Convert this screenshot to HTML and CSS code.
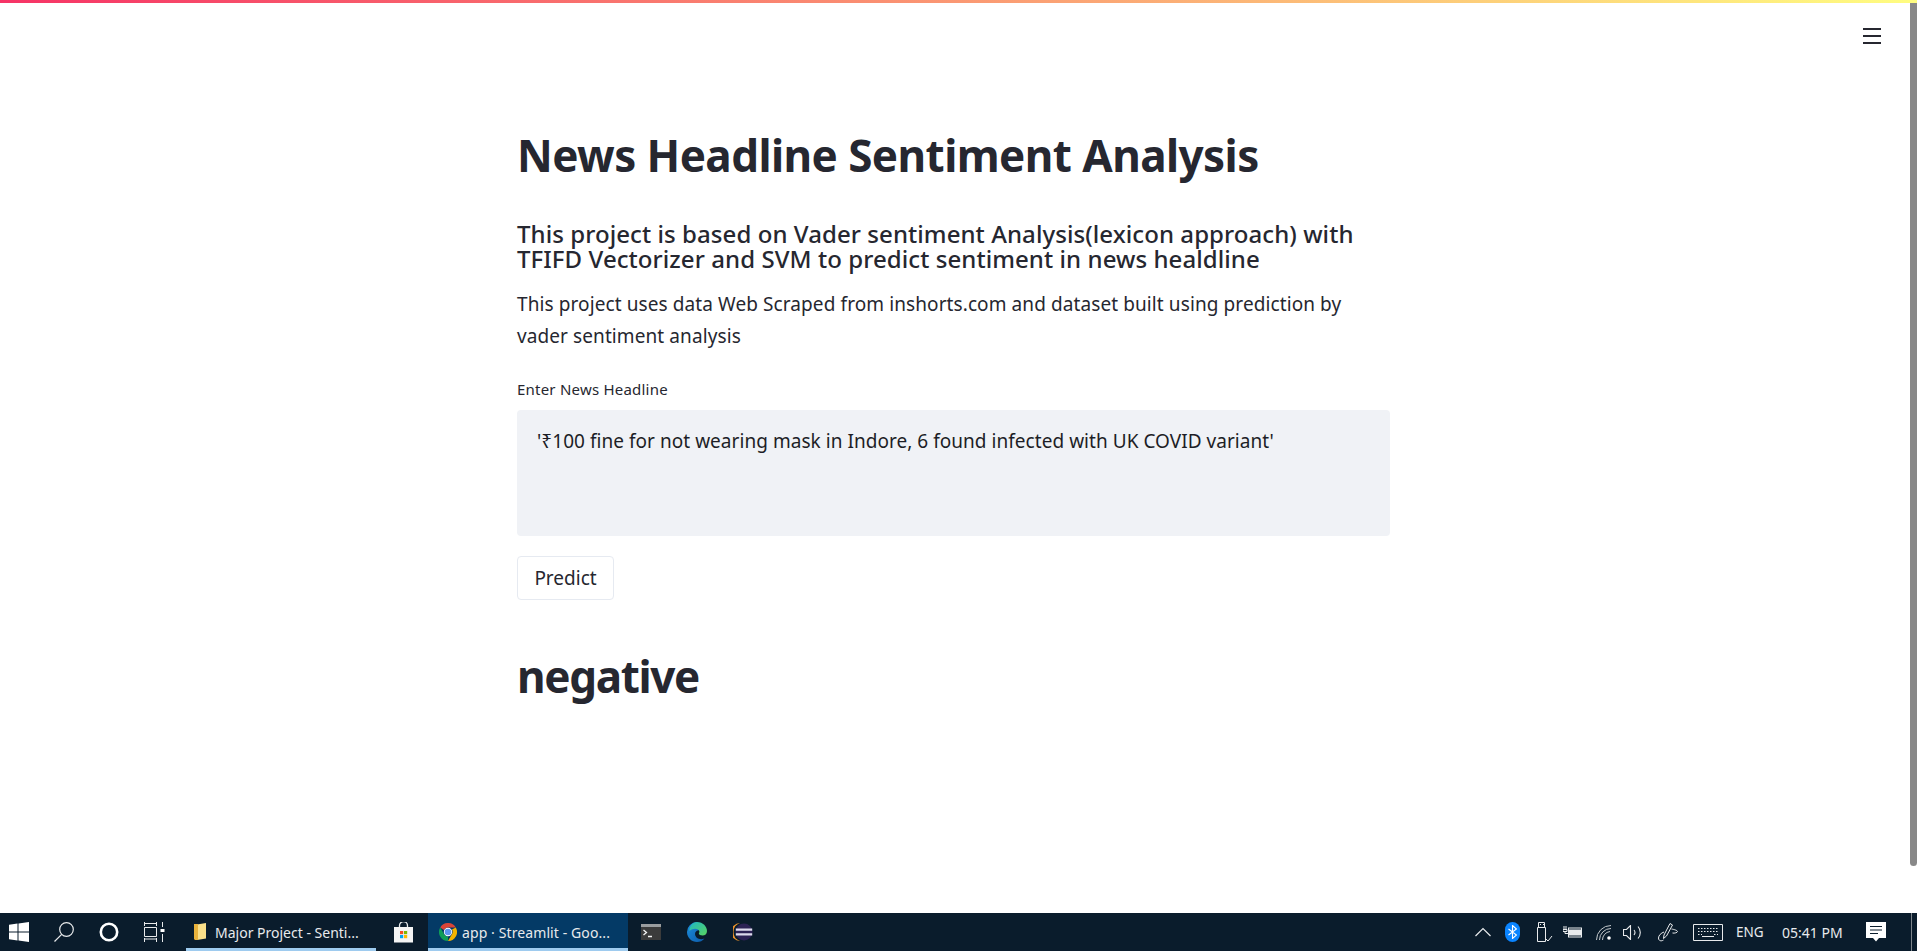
FILE: index.html
```html
<!DOCTYPE html>
<html lang="en">
<head>
<meta charset="utf-8">
<title>app · Streamlit</title>
<link rel="stylesheet" href="styles.css">
</head>
<body>
<div class="screen">
  <div class="decoration"></div>
  <div class="app">
    <main class="main">
      <div class="block">
        <h1 class="title">News Headline Sentiment Analysis</h1>
        <h3 class="subtitle">This project is based on Vader sentiment Analysis(lexicon approach) with TFIFD Vectorizer and SVM to predict sentiment in news healdline</h3>
        <p class="lead">This project uses data Web Scraped from inshorts.com and dataset built using prediction by vader sentiment analysis</p>
        <label class="label">Enter News Headline</label>
        <div class="textarea">'₹100 fine for not wearing mask in Indore, 6 found infected with UK COVID variant'</div>
        <button class="btn">Predict</button>
        <h1 class="result">negative</h1>
      </div>
    </main>
    <div class="scrolltrack"><div class="scrollthumb"></div></div>
    <svg class="menu" width="18" height="16" viewBox="0 0 18 16"><path d="M0 1h18M0 8h18M0 15h18" stroke="#262730" stroke-width="2.200"/></svg>
  </div>
  <footer class="taskbar">
    <div class="tb-group">
      <span class="tb-icon start"><svg width="20" height="20" viewBox="0 0 20 20"><path fill="#fff" d="M0 2.800 8.500 1.600v8H0zM9.500 1.500 20 0v9.600H9.500zM0 10.500h8.500v8L0 17.300zM9.500 10.500H20V20L9.500 18.500z"/></svg></span>
      <span class="tb-icon search"><svg width="20" height="20" viewBox="0 0 20 20" fill="none" stroke="#e8eaec" stroke-width="1.200"><circle cx="12.500" cy="7.500" r="6.800"/><path d="M7.700 12.300 .5 19.500"/></svg></span>
      <span class="tb-icon cortana"><svg width="20" height="20" viewBox="0 0 20 20" fill="none"><circle cx="10" cy="10" r="8.200" stroke="#fff" stroke-width="2.600"/></svg></span>
      <span class="tb-icon taskview"><svg width="21" height="20" viewBox="0 0 21 20" fill="none" stroke="#e8eaec" stroke-width="1"><path d="M.5 0v4M12.500 0v4M0 1.500h13M.5 5.500h12v9H.5zM0 17h13M.5 16v4M12.500 16v4M18.500 0v5M18.500 12v8"/><path fill="#fff" stroke="none" d="M16.500 7h4v3h-4z"/></svg></span>
      <div class="task open"><svg class="folder" width="12" height="18" viewBox="0 0 12 18"><path fill="#fbe08a" d="M3 1.500 12 0v15.500L3 17z"/><path fill="#e8b23c" d="M0 1h4v16H1l-1-1z"/></svg><span>Major Project - Senti...</span></div>
      <span class="tb-icon store"><svg width="19" height="21" viewBox="0 0 19 21"><path d="M5.500 6V3.500a4 4 0 0 1 8 0V6" fill="none" stroke="#e8eaec" stroke-width="1.300"/><path fill="#f4f4f4" d="M0 5h19v15.500H0z"/><path fill="#f25022" d="M6 9h3.200v3.200H6z"/><path fill="#7fba00" d="M10 9h3.200v3.200H10z"/><path fill="#00a4ef" d="M6 13h3.200v3.200H6z"/><path fill="#ffb900" d="M10 13h3.200v3.200H10z"/></svg></span>
      <div class="task active"><svg width="18" height="18" viewBox="0 0 18 18"><path fill="#db4437" d="M1.200 4.500A9 9 0 0 1 16.800 4.500H9a4.500 4.500 0 0 0-4 2.500z"/><path fill="#0f9d58" d="M1.200 4.500 5.100 11.300a4.500 4.500 0 0 0 3.900 2.200L9 18A9 9 0 0 1 1.200 4.500z"/><path fill="#f4b400" d="M16.800 4.500A9 9 0 0 1 9 18l3.900-6.700A4.500 4.500 0 0 0 13 6.500z"/><circle cx="9" cy="9" r="4.200" fill="#fff"/><circle cx="9" cy="9" r="3.300" fill="#5b96ef"/></svg><span>app · Streamlit - Goo...</span></div>
      <span class="tb-icon term"><svg width="20" height="16" viewBox="0 0 20 16"><path fill="#3b3b3b" d="M0 3h20v13H0z"/><path fill="#9a9d9f" d="M0 0h20v3H0z"/><path d="m2.500 6 3 2.500-3 2.500M7 12.500h4" stroke="#f4f4f4" stroke-width="1.300" fill="none"/></svg></span>
      <span class="tb-icon edge"><svg width="20" height="20" viewBox="0 0 20 20"><defs><linearGradient id="edge-top" x1="0" y1="0" x2="1" y2="1"><stop offset="0" stop-color="#1fb8c4"/><stop offset="1" stop-color="#59d45f"/></linearGradient><linearGradient id="edge-low" x1="0" y1="0" x2="1" y2="1"><stop offset="0" stop-color="#1c8fe0"/><stop offset="1" stop-color="#0c5aa8"/></linearGradient></defs><path fill="url(#edge-low)" d="M10 0A10 10 0 0 0 0 10c0 6 5 10 10 10 3 0 5.500-1 7.500-3.500-3 1.200-6 .8-8-1-2-2-2-5 0-6.500 1.500-1 3-1 4-1z"/><path fill="url(#edge-top)" d="M10 0c6 0 10 4.500 10 9 0 3-2 4.500-4.500 4.500-2 0-3.500-.8-3.700-2 1-1.500.7-3-.8-4C9 6.200 5 6.500 2.500 9 2 4.500 5.500 0 10 0z"/></svg></span>
      <span class="tb-icon eclipse"><svg width="20" height="18" viewBox="0 0 20 18"><path fill="#f0942a" d="M7 0A9 9 0 0 0 7 18 9.500 9.500 0 0 1 7 0z"/><circle cx="11" cy="9" r="8.500" fill="#2c2255"/><path fill="#dcdaec" d="M2.800 5.500h16.400v2.200H2.800zM2.800 10.300h16.400v2.200H2.800z"/></svg></span>
    </div>
    <div class="tray">
      <svg class="t-chev" width="16" height="10" viewBox="0 0 16 10" fill="none" stroke="#e8eaec" stroke-width="1.200"><path d="m.5 9 7.500-7.500L15.500 9"/></svg>
      <span class="t-bt"><svg width="9" height="14" viewBox="0 0 9 14" fill="none" stroke="#fff" stroke-width="1.100"><path d="m.5 4 8 6-4 3.500V.5l4 3.500-8 6"/></svg></span>
      <svg class="t-usb" width="16" height="20" viewBox="0 0 16 20" fill="none" stroke="#e8eaec" stroke-width="1"><path d="M1.500.5h6v5h-6zM.5 5.500h8v14h-8zM3 2.500h1M6 2.500h1M9 17l2 2 4-5"/></svg>
      <svg class="t-bat" width="20" height="13" viewBox="0 0 20 13"><path fill="none" stroke="#e8eaec" d="M1 0v3M3 0v3M0 3.500h4v2H0zM2 5.500V7.500h3"/><path fill="#e8eaec" d="M5 1.500h14v10H5z"/><path fill="#0a1c2c" d="M6 2.500h12v1H6zM6 9.500h12v1H6z"/></svg>
      <svg class="t-wifi" width="16" height="15" viewBox="0 0 16 15" fill="none" stroke="#c4c9cd" stroke-width="1"><path d="M.5 15A14.500 14.500 0 0 1 15 .5M3.500 15A11.500 11.500 0 0 1 15 3.500M6.500 15A8.500 8.500 0 0 1 14 6.500"/><circle cx="13" cy="13" r="1.800" fill="#fff" stroke="none"/></svg>
      <svg class="t-vol" width="20" height="15" viewBox="0 0 20 15" fill="none" stroke="#e8eaec" stroke-width="1.100"><path d="M.5 4.500h3l4-4v14l-4-4h-3zM11 5a4 4 0 0 1 0 5M15 1.500a9 9 0 0 1 0 12"/></svg>
      <svg class="t-pen" width="20" height="20" viewBox="0 0 20 20" fill="none" stroke="#e8eaec" stroke-width="1"><path d="M12 1.500 6 13l-.5 3.500L8.500 14 14.500 3zM13.500 7c3 .5 6 1.500 6 2.500 0 1-3 2-5 1.500M6 10c-3 1-5.500 3.500-5.500 6 0 3 3 3.500 5 2"/></svg>
      <svg class="t-kbd" width="30" height="17" viewBox="0 0 30 17" fill="none" stroke="#e8eaec" stroke-width="1"><path d="M.5.5h29v16H.5z"/><path stroke-dasharray="1.500 1.500" d="M5 4.500h20M5 7.500h20M5 10.500h4M21 10.500h4"/><path d="M9 12.500h12"/></svg>
      <span class="t-lang">ENG</span>
      <span class="t-time">05:41 PM</span>
      <svg class="t-notif" width="20" height="20" viewBox="0 0 20 20"><path fill="#fff" d="M0 0h20v16h-7l-3 3.500L7 16H0z"/><path stroke="#0a1c2c" d="M4 4.500h12M4 8h12M4 11.500h8"/></svg>
      <span class="t-desk"></span>
    </div>
  </footer>
</div>
</body>
</html>
```
FILE: styles.css
```css
* { box-sizing: border-box; }
html, body { margin: 0; padding: 0; height: 100%; overflow: hidden; }
body { font-family: "Noto Sans", "Open Sans", sans-serif; color: #262730; background: #fff; }
.screen { height: 951px; display: flex; flex-direction: column; }
.decoration { height: 3px; flex: none; background: linear-gradient(90deg, #f63366, #fffd80); }
.app { flex: 1; position: relative; display: flex; min-height: 0; }
.main { flex: 1; display: flex; justify-content: center; padding-right: 3px; }
.block { width: 873px; padding-top: 122px; }
.title { margin: 0; font-size: 44px; line-height: 60px; font-weight: 700; letter-spacing: -0.56px; color: #262730; }
.subtitle { margin: 36px 0 0; font-size: 24px; line-height: 25px; font-weight: 500; letter-spacing: 0.07px; }
.lead { margin: 17px 0 0; font-size: 19px; line-height: 32px; font-weight: 400; letter-spacing: 0.095px; }
.label { display: block; margin-top: 27px; font-size: 15px; line-height: 20px; letter-spacing: 0.22px; }
.textarea { margin-top: 11px; height: 126px; padding: 17px 20px; background: #f0f2f6; border-radius: 4px; font-size: 19px; line-height: 28px; letter-spacing: 0.04px; color: #1d1e26; }
.btn { display: block; margin-top: 20px; width: 97px; height: 44px; padding: 0; background: #fff; border: 1px solid #e6eaf1; border-radius: 4px; font: inherit; font-size: 19px; font-weight: 400; color: #262730; }
.result { margin: 46px 0 0; font-size: 44px; line-height: 60px; font-weight: 700; letter-spacing: -1.35px; }
.scrolltrack { width: 7px; flex: none; }
.scrollthumb { height: 863px; background: #888; border-radius: 0 0 4px 4px; }
.menu { position: absolute; top: 25px; left: 1863px; }
.taskbar { height: 38px; flex: none; background: #0a1c2c; display: flex; justify-content: space-between; color: #e8eaec; }
.tb-group { display: flex; align-items: center; }
.tb-icon { height: 38px; width: 46px; display: flex; align-items: center; justify-content: center; flex: none; }
.start { width: 38px; }
.search { width: 52px; }
.cortana { width: 38px; }
.taskview { width: 53px; margin-right: 5px; }
.task { height: 38px; display: flex; align-items: center; font-size: 14px; border-bottom: 3px solid #9ecbef; padding-top: 3px; flex: none; }
.task.open { width: 190px; padding-left: 8px; gap: 9px; }
.task.active { width: 200px; padding-left: 11px; gap: 5px; background: #043a66; letter-spacing: 0.1px; }
.store { width: 52px; padding-left: 3px; }
.tray { display: flex; align-items: center; }
.t-chev { margin-right: 14px; }
.t-bt { width: 15px; height: 20px; border-radius: 8px; background: #0a84ff; display: flex; align-items: center; justify-content: center; margin-right: 17px; }
.t-usb { margin-right: 10px; }
.t-bat { margin-right: 13px; }
.t-wifi { margin-right: 11px; }
.t-vol { margin-right: 15px; }
.t-pen { margin-right: 15px; }
.t-kbd { margin-right: 13px; }
.t-lang { font-size: 13.5px; width: 27px; margin-right: 19px; }
.t-time { font-size: 14px; width: 60px; white-space: nowrap; margin-right: 24px; }
.t-notif { margin-right: 25px; }
.t-desk { width: 1px; height: 38px; background: #7d858c; margin-right: 5px; }
```
